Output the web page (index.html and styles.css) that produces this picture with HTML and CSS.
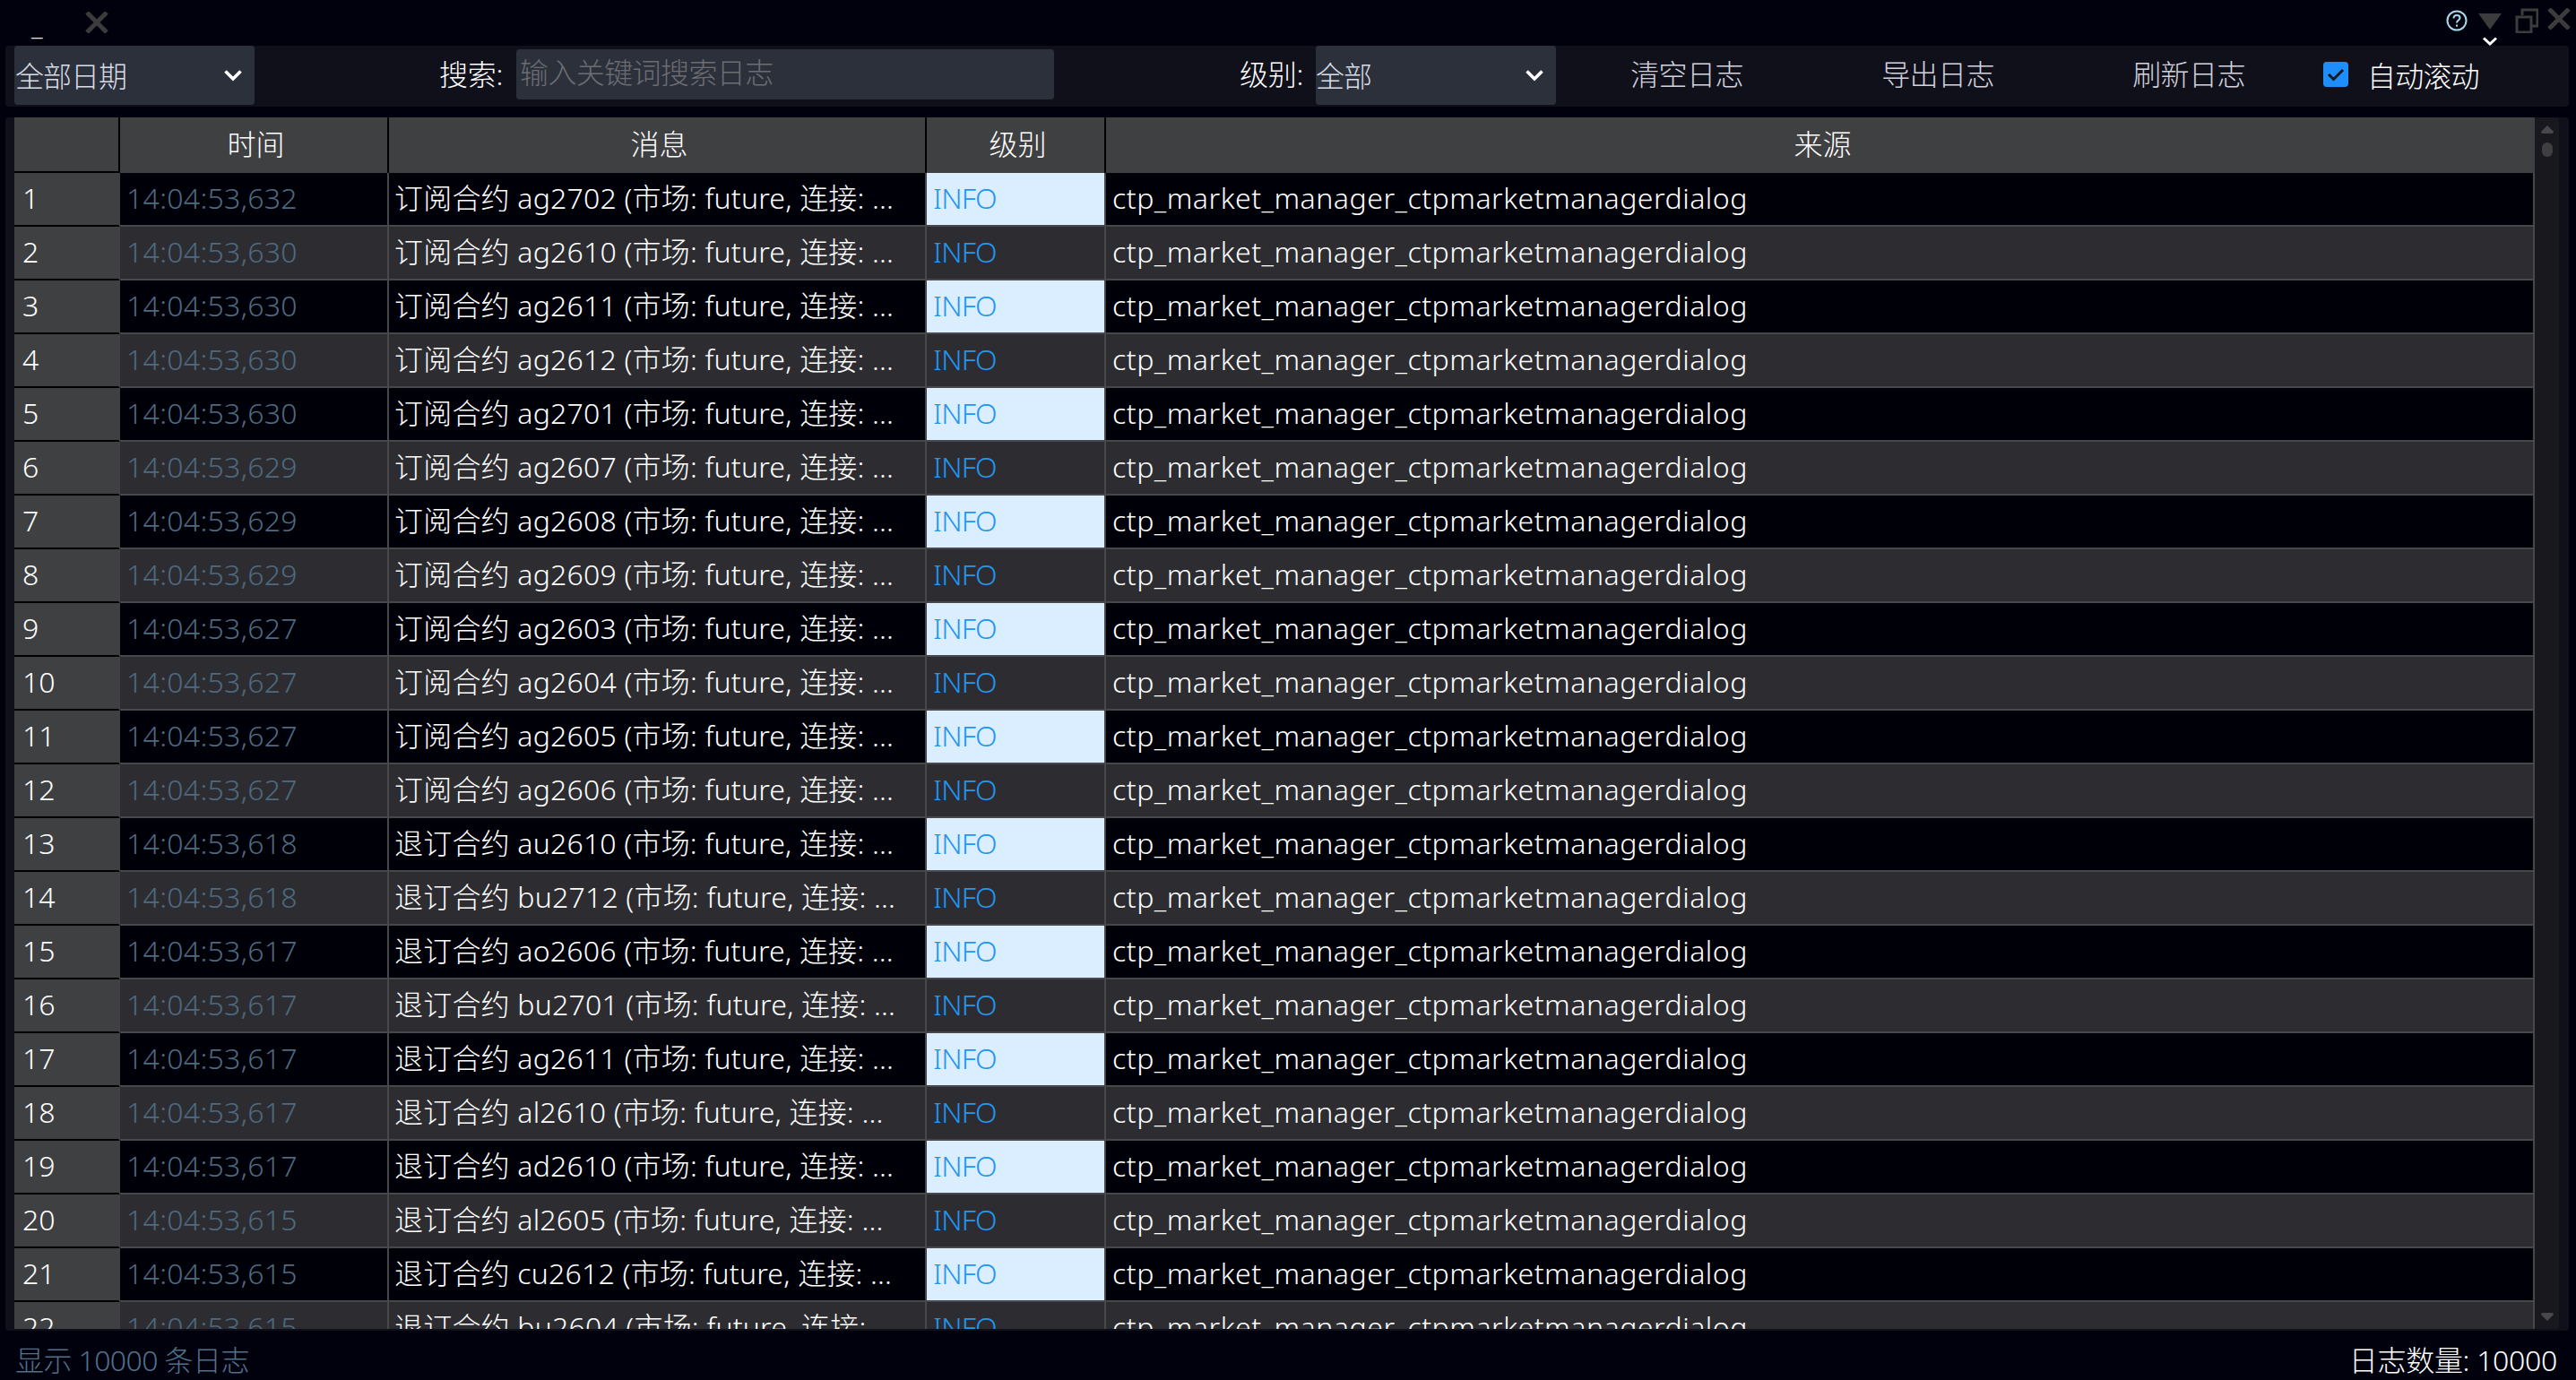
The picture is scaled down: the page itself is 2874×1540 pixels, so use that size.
FILE: index.html
```html
<!DOCTYPE html>
<html lang="zh-CN">
<head>
    <meta charset="UTF-8">
    <title>日志</title>
    <link rel="stylesheet" href="styles.css">
</head>
<body>
    <div class="window">
        <!-- 标题栏 -->
        <div class="titlebar">
            <div class="title-left">
                <span class="min-mark">_</span>
                <svg class="title-x" width="26" height="24" viewBox="0 0 26 24"><path d="M2 1 L24 23 M24 1 L2 23" stroke="#3c3c3c" stroke-width="5" fill="none"/></svg>
            </div>
            <div class="title-right">
                <svg width="24" height="24" viewBox="0 0 24 24"><circle cx="12" cy="12" r="10.5" fill="none" stroke="#a9d9e8" stroke-width="2"/><path d="M8.5 9.5 C8.5 7 10 6 12 6 C14 6 15.5 7.2 15.5 9 C15.5 11.5 12 11.5 12 14.5" fill="none" stroke="#a9d9e8" stroke-width="2"/><rect x="11" y="16.5" width="2" height="2.2" fill="#a9d9e8"/></svg>
                <svg class="title-tri" width="26" height="18" viewBox="0 0 26 18"><path d="M0 0 H26 L13 18 Z" fill="#3c3c3c"/></svg>
                <svg width="26" height="28" viewBox="0 0 26 28"><path d="M8 8 V2 H25 V20 H18 M2 10 H18 V27 H2 Z" fill="none" stroke="#3c3c3c" stroke-width="3"/></svg>
                <svg width="26" height="24" viewBox="0 0 26 24"><path d="M2 1 L24 23 M24 1 L2 23" stroke="#3c3c3c" stroke-width="5" fill="none"/></svg>
                <svg class="title-chevron" width="18" height="10" viewBox="0 0 18 10"><path d="M2 1.5 L9 8 L16 1.5" fill="none" stroke="#fff" stroke-width="3"/></svg>
            </div>
        </div>

        <!-- 工具栏 -->
        <div class="toolbar">
            <div class="combo combo-date">
                <span>全部日期</span>
                <svg width="22" height="14" viewBox="0 0 22 14"><path d="M2.5 2.5 L11 11 L19.5 2.5" fill="none" stroke="#fff" stroke-width="3.6"/></svg>
            </div>
            <label class="field-label label-search">搜索:</label>
            <div class="search-input">输入关键词搜索日志</div>
            <label class="field-label label-level">级别:</label>
            <div class="combo combo-level">
                <span>全部</span>
                <svg width="22" height="14" viewBox="0 0 22 14"><path d="M2.5 2.5 L11 11 L19.5 2.5" fill="none" stroke="#fff" stroke-width="3.6"/></svg>
            </div>
            <div class="tool-btn">清空日志</div>
            <div class="tool-btn">导出日志</div>
            <div class="tool-btn">刷新日志</div>
            <div class="auto-scroll">
                <span class="checkbox">
                    <svg width="20" height="16" viewBox="0 0 20 16"><path d="M2 8 L7.5 13.5 L18 3" fill="none" stroke="#16181f" stroke-width="3"/></svg>
                </span>
                <span>自动滚动</span>
            </div>
        </div>

        <!-- 日志表格 -->
        <div class="table-panel">
            <div class="table-wrap">
                <table class="log-table">
                    <colgroup>
                        <col class="col-num"><col class="col-time"><col class="col-msg"><col class="col-level"><col class="col-src">
                    </colgroup>
                    <thead>
                        <tr><th></th><th>时间</th><th>消息</th><th>级别</th><th>来源</th></tr>
                    </thead>
                    <tbody>
                        <tr><th>1</th><td class="time">14:04:53,632</td><td class="msg">订阅合约 ag2702 (市场: future, 连接: ...</td><td class="level">INFO</td><td class="src">ctp_market_manager_ctpmarketmanagerdialog</td></tr>
                        <tr><th>2</th><td class="time">14:04:53,630</td><td class="msg">订阅合约 ag2610 (市场: future, 连接: ...</td><td class="level">INFO</td><td class="src">ctp_market_manager_ctpmarketmanagerdialog</td></tr>
                        <tr><th>3</th><td class="time">14:04:53,630</td><td class="msg">订阅合约 ag2611 (市场: future, 连接: ...</td><td class="level">INFO</td><td class="src">ctp_market_manager_ctpmarketmanagerdialog</td></tr>
                        <tr><th>4</th><td class="time">14:04:53,630</td><td class="msg">订阅合约 ag2612 (市场: future, 连接: ...</td><td class="level">INFO</td><td class="src">ctp_market_manager_ctpmarketmanagerdialog</td></tr>
                        <tr><th>5</th><td class="time">14:04:53,630</td><td class="msg">订阅合约 ag2701 (市场: future, 连接: ...</td><td class="level">INFO</td><td class="src">ctp_market_manager_ctpmarketmanagerdialog</td></tr>
                        <tr><th>6</th><td class="time">14:04:53,629</td><td class="msg">订阅合约 ag2607 (市场: future, 连接: ...</td><td class="level">INFO</td><td class="src">ctp_market_manager_ctpmarketmanagerdialog</td></tr>
                        <tr><th>7</th><td class="time">14:04:53,629</td><td class="msg">订阅合约 ag2608 (市场: future, 连接: ...</td><td class="level">INFO</td><td class="src">ctp_market_manager_ctpmarketmanagerdialog</td></tr>
                        <tr><th>8</th><td class="time">14:04:53,629</td><td class="msg">订阅合约 ag2609 (市场: future, 连接: ...</td><td class="level">INFO</td><td class="src">ctp_market_manager_ctpmarketmanagerdialog</td></tr>
                        <tr><th>9</th><td class="time">14:04:53,627</td><td class="msg">订阅合约 ag2603 (市场: future, 连接: ...</td><td class="level">INFO</td><td class="src">ctp_market_manager_ctpmarketmanagerdialog</td></tr>
                        <tr><th>10</th><td class="time">14:04:53,627</td><td class="msg">订阅合约 ag2604 (市场: future, 连接: ...</td><td class="level">INFO</td><td class="src">ctp_market_manager_ctpmarketmanagerdialog</td></tr>
                        <tr><th>11</th><td class="time">14:04:53,627</td><td class="msg">订阅合约 ag2605 (市场: future, 连接: ...</td><td class="level">INFO</td><td class="src">ctp_market_manager_ctpmarketmanagerdialog</td></tr>
                        <tr><th>12</th><td class="time">14:04:53,627</td><td class="msg">订阅合约 ag2606 (市场: future, 连接: ...</td><td class="level">INFO</td><td class="src">ctp_market_manager_ctpmarketmanagerdialog</td></tr>
                        <tr><th>13</th><td class="time">14:04:53,618</td><td class="msg">退订合约 au2610 (市场: future, 连接: ...</td><td class="level">INFO</td><td class="src">ctp_market_manager_ctpmarketmanagerdialog</td></tr>
                        <tr><th>14</th><td class="time">14:04:53,618</td><td class="msg">退订合约 bu2712 (市场: future, 连接: ...</td><td class="level">INFO</td><td class="src">ctp_market_manager_ctpmarketmanagerdialog</td></tr>
                        <tr><th>15</th><td class="time">14:04:53,617</td><td class="msg">退订合约 ao2606 (市场: future, 连接: ...</td><td class="level">INFO</td><td class="src">ctp_market_manager_ctpmarketmanagerdialog</td></tr>
                        <tr><th>16</th><td class="time">14:04:53,617</td><td class="msg">退订合约 bu2701 (市场: future, 连接: ...</td><td class="level">INFO</td><td class="src">ctp_market_manager_ctpmarketmanagerdialog</td></tr>
                        <tr><th>17</th><td class="time">14:04:53,617</td><td class="msg">退订合约 ag2611 (市场: future, 连接: ...</td><td class="level">INFO</td><td class="src">ctp_market_manager_ctpmarketmanagerdialog</td></tr>
                        <tr><th>18</th><td class="time">14:04:53,617</td><td class="msg">退订合约 al2610 (市场: future, 连接: ...</td><td class="level">INFO</td><td class="src">ctp_market_manager_ctpmarketmanagerdialog</td></tr>
                        <tr><th>19</th><td class="time">14:04:53,617</td><td class="msg">退订合约 ad2610 (市场: future, 连接: ...</td><td class="level">INFO</td><td class="src">ctp_market_manager_ctpmarketmanagerdialog</td></tr>
                        <tr><th>20</th><td class="time">14:04:53,615</td><td class="msg">退订合约 al2605 (市场: future, 连接: ...</td><td class="level">INFO</td><td class="src">ctp_market_manager_ctpmarketmanagerdialog</td></tr>
                        <tr><th>21</th><td class="time">14:04:53,615</td><td class="msg">退订合约 cu2612 (市场: future, 连接: ...</td><td class="level">INFO</td><td class="src">ctp_market_manager_ctpmarketmanagerdialog</td></tr>
                        <tr><th>22</th><td class="time">14:04:53,615</td><td class="msg">退订合约 bu2604 (市场: future, 连接: ...</td><td class="level">INFO</td><td class="src">ctp_market_manager_ctpmarketmanagerdialog</td></tr>
                    </tbody>
                </table>
            </div>
            <div class="scrollbar">
                <div class="scroll-top">
                    <svg width="14" height="9" viewBox="0 0 14 9"><path d="M7 0 L14 7 Q14 9 12 9 H2 Q0 9 0 7 Z" fill="#48484b"/></svg>
                    <span class="scroll-handle"></span>
                </div>
                <svg width="14" height="9" viewBox="0 0 14 9"><path d="M7 9 L14 2 Q14 0 12 0 H2 Q0 0 0 2 Z" fill="#48484b"/></svg>
            </div>
        </div>

        <!-- 状态栏 -->
        <div class="statusbar">
            <span class="status-left">显示 10000 条日志</span>
            <span class="status-right">日志数量: 10000</span>
        </div>
    </div>
</body>
</html>
```

FILE: styles.css
```css
* {
    box-sizing: border-box;
}
html, body {
    margin: 0;
    padding: 0;
    height: 100%;
    overflow: hidden;
}
body {
    background: #01010e;
    color: #fff;
    font-family: "Noto Sans", "Noto Sans CJK SC", sans-serif;
    font-size: 32px;
    font-weight: 300;
}
.window {
    display: flex;
    flex-direction: column;
    height: 1540px;
    padding: 0 8px 0 6px;
}

/* 标题栏 */
.titlebar {
    height: 51px;
    display: flex;
    justify-content: space-between;
    flex-shrink: 0;
}
.title-left {
    display: flex;
    align-items: flex-start;
    padding: 13px 0 0 29px;
    gap: 37px;
}
.min-mark {
    font-size: 30px;
    line-height: 30px;
    width: 23px;
    height: 30px;
    color: #e8e8e8;
}
.title-right {
    position: relative;
    display: flex;
    align-items: flex-start;
    gap: 10px;
    padding-top: 9px;
    margin-right: -2px;
}
.title-right svg:first-child {
    margin-top: 2px;
    margin-right: 2px;
}
.title-right svg:last-of-type {
    margin-top: 4px;
}
.title-tri {
    margin-top: 6px;
    margin-right: 5px;
}
.title-chevron {
    position: absolute;
    left: 40px;
    top: 41px;
    margin: 0 !important;
}

/* 工具栏 */
.toolbar {
    height: 68px;
    flex-shrink: 0;
    display: flex;
    align-items: flex-start;
    background: #10101b;
    border-radius: 4px;
    padding-left: 10px;
}
.combo {
    height: 66px;
    background: #2c303b;
    border-radius: 4px;
    display: flex;
    align-items: center;
    justify-content: space-between;
    padding: 0 13px 2px 1px;
    color: #d8dce6;
    letter-spacing: -1px;
}
.combo svg {
    margin-top: 2px;
}
.combo-date {
    width: 268px;
}
.combo-level {
    width: 268px;
    padding-left: 0;
}
.field-label {
    line-height: 64px;
    white-space: nowrap;
    letter-spacing: -0.3px;
}
.label-search {
    margin-left: 206px;
    width: 86px;
}
.search-input {
    width: 600px;
    height: 56px;
    margin-top: 4px;
    background: #2c303b;
    border-radius: 4px;
    padding-left: 4px;
    line-height: 52px;
    color: #6b6d72;
    letter-spacing: -0.6px;
}
.label-level {
    margin-left: 207px;
    width: 85px;
}
.tool-btn {
    width: 280px;
    flex-shrink: 0;
    line-height: 64px;
    text-align: center;
    color: #d2d2de;
    letter-spacing: -0.6px;
}
.combo-level + .tool-btn {
    margin-left: 6px;
}
.auto-scroll {
    display: flex;
    align-items: center;
    height: 64px;
    margin-left: 10px;
    gap: 21px;
    letter-spacing: -0.8px;
}
.checkbox {
    width: 28px;
    height: 28px;
    background: #1e8ffa;
    border-radius: 4px;
    display: flex;
    align-items: center;
    justify-content: center;
}

/* 表格 */
.table-panel {
    display: flex;
    height: 1354px;
    margin-top: 12px;
    flex-shrink: 0;
    background: #10101b;
    border-radius: 4px;
    padding: 0 11px 2px 10px;
}
.table-wrap {
    width: 2812px;
    overflow: hidden;
}
.log-table {
    width: 2812px;
    table-layout: fixed;
    border-collapse: separate;
    border-spacing: 0;
    line-height: 40px;
}
.col-num { width: 118px; }
.col-time { width: 300px; }
.col-msg { width: 600px; }
.col-level { width: 200px; }
.col-src { width: 1594px; }
.log-table thead th {
    height: 62px;
    padding: 0 0 2px 5px;
    background: #3f4042;
    font-weight: 300;
    text-align: center;
    border-right: 2px solid #000;
}
.log-table thead th:last-child {
    border-right: none;
}
.log-table tbody tr {
    background: #000008;
}
.log-table tbody tr:nth-child(even) {
    background: #2d2d31;
}
.log-table tbody th {
    height: 60px;
    padding: 0 0 2px 9px;
    background: #3f4042;
    font-weight: 300;
    text-align: left;
    border-right: 2px solid #3f4042;
    border-bottom: 2px solid #000;
}
.log-table thead th:first-child {
    border-bottom: 2px solid #000;
}
.log-table td {
    height: 60px;
    padding: 0 0 2px 7px;
    white-space: nowrap;
    overflow: hidden;
    border-right: 2px solid #47484a;
    border-bottom: 2px solid #47484a;
}
.log-table td.time {
    color: #4d6a80;
    letter-spacing: 0.3px;
}
.log-table td.msg {
    letter-spacing: 0.2px;
    padding-left: 6px;
}
.log-table td.src {
    letter-spacing: 0.52px;
}
.log-table td.level {
    color: #2196f3;
    letter-spacing: -0.8px;
}
.log-table tbody tr:nth-child(odd) td.level {
    background: #dbeeff;
}

/* 滚动条 */
.scrollbar {
    width: 27px;
    background: #18181e;
    border-radius: 4px;
    display: flex;
    flex-direction: column;
    align-items: center;
    justify-content: space-between;
    padding: 9px 0;
}
.scroll-top {
    display: flex;
    flex-direction: column;
    align-items: center;
    gap: 10px;
}
.scroll-handle {
    width: 12px;
    height: 16px;
    border-radius: 6px;
    background: #3f3f42;
}

/* 状态栏 */
.statusbar {
    flex: 1;
    display: flex;
    justify-content: space-between;
    align-items: center;
    padding: 6px 13px 0 11px;
}
.status-left {
    color: #4f7088;
    letter-spacing: -0.6px;
}
.status-right {
    letter-spacing: -0.3px;
}
```
